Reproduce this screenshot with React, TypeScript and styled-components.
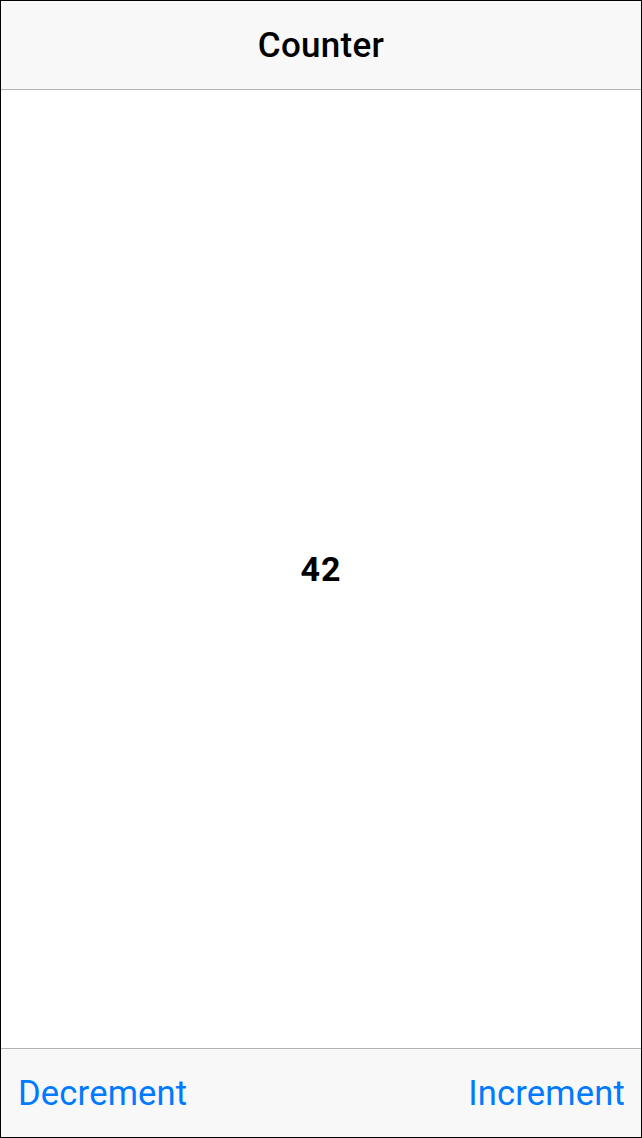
import React, { useState } from "react";
import styled, { createGlobalStyle } from "styled-components";

const Global = createGlobalStyle`
  html, body { margin: 0; padding: 0; background: #fff; }
  * { box-sizing: border-box; }
`;

const Screen = styled.div`
  width: 642px;
  height: 1138px;
  border: 1px solid #000;
  display: flex;
  flex-direction: column;
  font-family: Roboto, "Liberation Sans", sans-serif;
  background: #fff;
`;

const NavBar = styled.header`
  height: 89px;
  flex: none;
  background: #f8f8f8;
  border-bottom: 1px solid #b2b2b2;
  display: flex;
  align-items: center;
  justify-content: center;
`;

const Title = styled.h1`
  margin: 0;
  font-size: 35px;
  font-weight: 500;
  color: #000;
  letter-spacing: 0.3px;
`;

const Body = styled.main`
  flex: 1;
  display: flex;
  align-items: center;
  justify-content: center;
`;

const Count = styled.div`
  font-size: 34px;
  font-weight: 700;
  color: #000;
  letter-spacing: 1px;
`;

const Toolbar = styled.footer`
  height: 89px;
  flex: none;
  background: #f8f8f8;
  border-top: 1px solid #b2b2b2;
  display: flex;
  align-items: center;
  justify-content: space-between;
  padding: 0 16px 0 17px;
`;

const ToolButton = styled.button`
  border: none;
  background: none;
  padding: 0;
  font-family: inherit;
  font-size: 34.5px;
  font-weight: 400;
  color: #007aff;
  cursor: pointer;
  letter-spacing: 0.2px;
`;

export default function App() {
  const [count, setCount] = useState(42);
  return (
    <>
      <Global />
      <Screen>
        <NavBar>
          <Title>Counter</Title>
        </NavBar>
        <Body>
          <Count>{count}</Count>
        </Body>
        <Toolbar>
          <ToolButton onClick={() => setCount((c) => c - 1)}>Decrement</ToolButton>
          <ToolButton onClick={() => setCount((c) => c + 1)}>Increment</ToolButton>
        </Toolbar>
      </Screen>
    </>
  );
}
